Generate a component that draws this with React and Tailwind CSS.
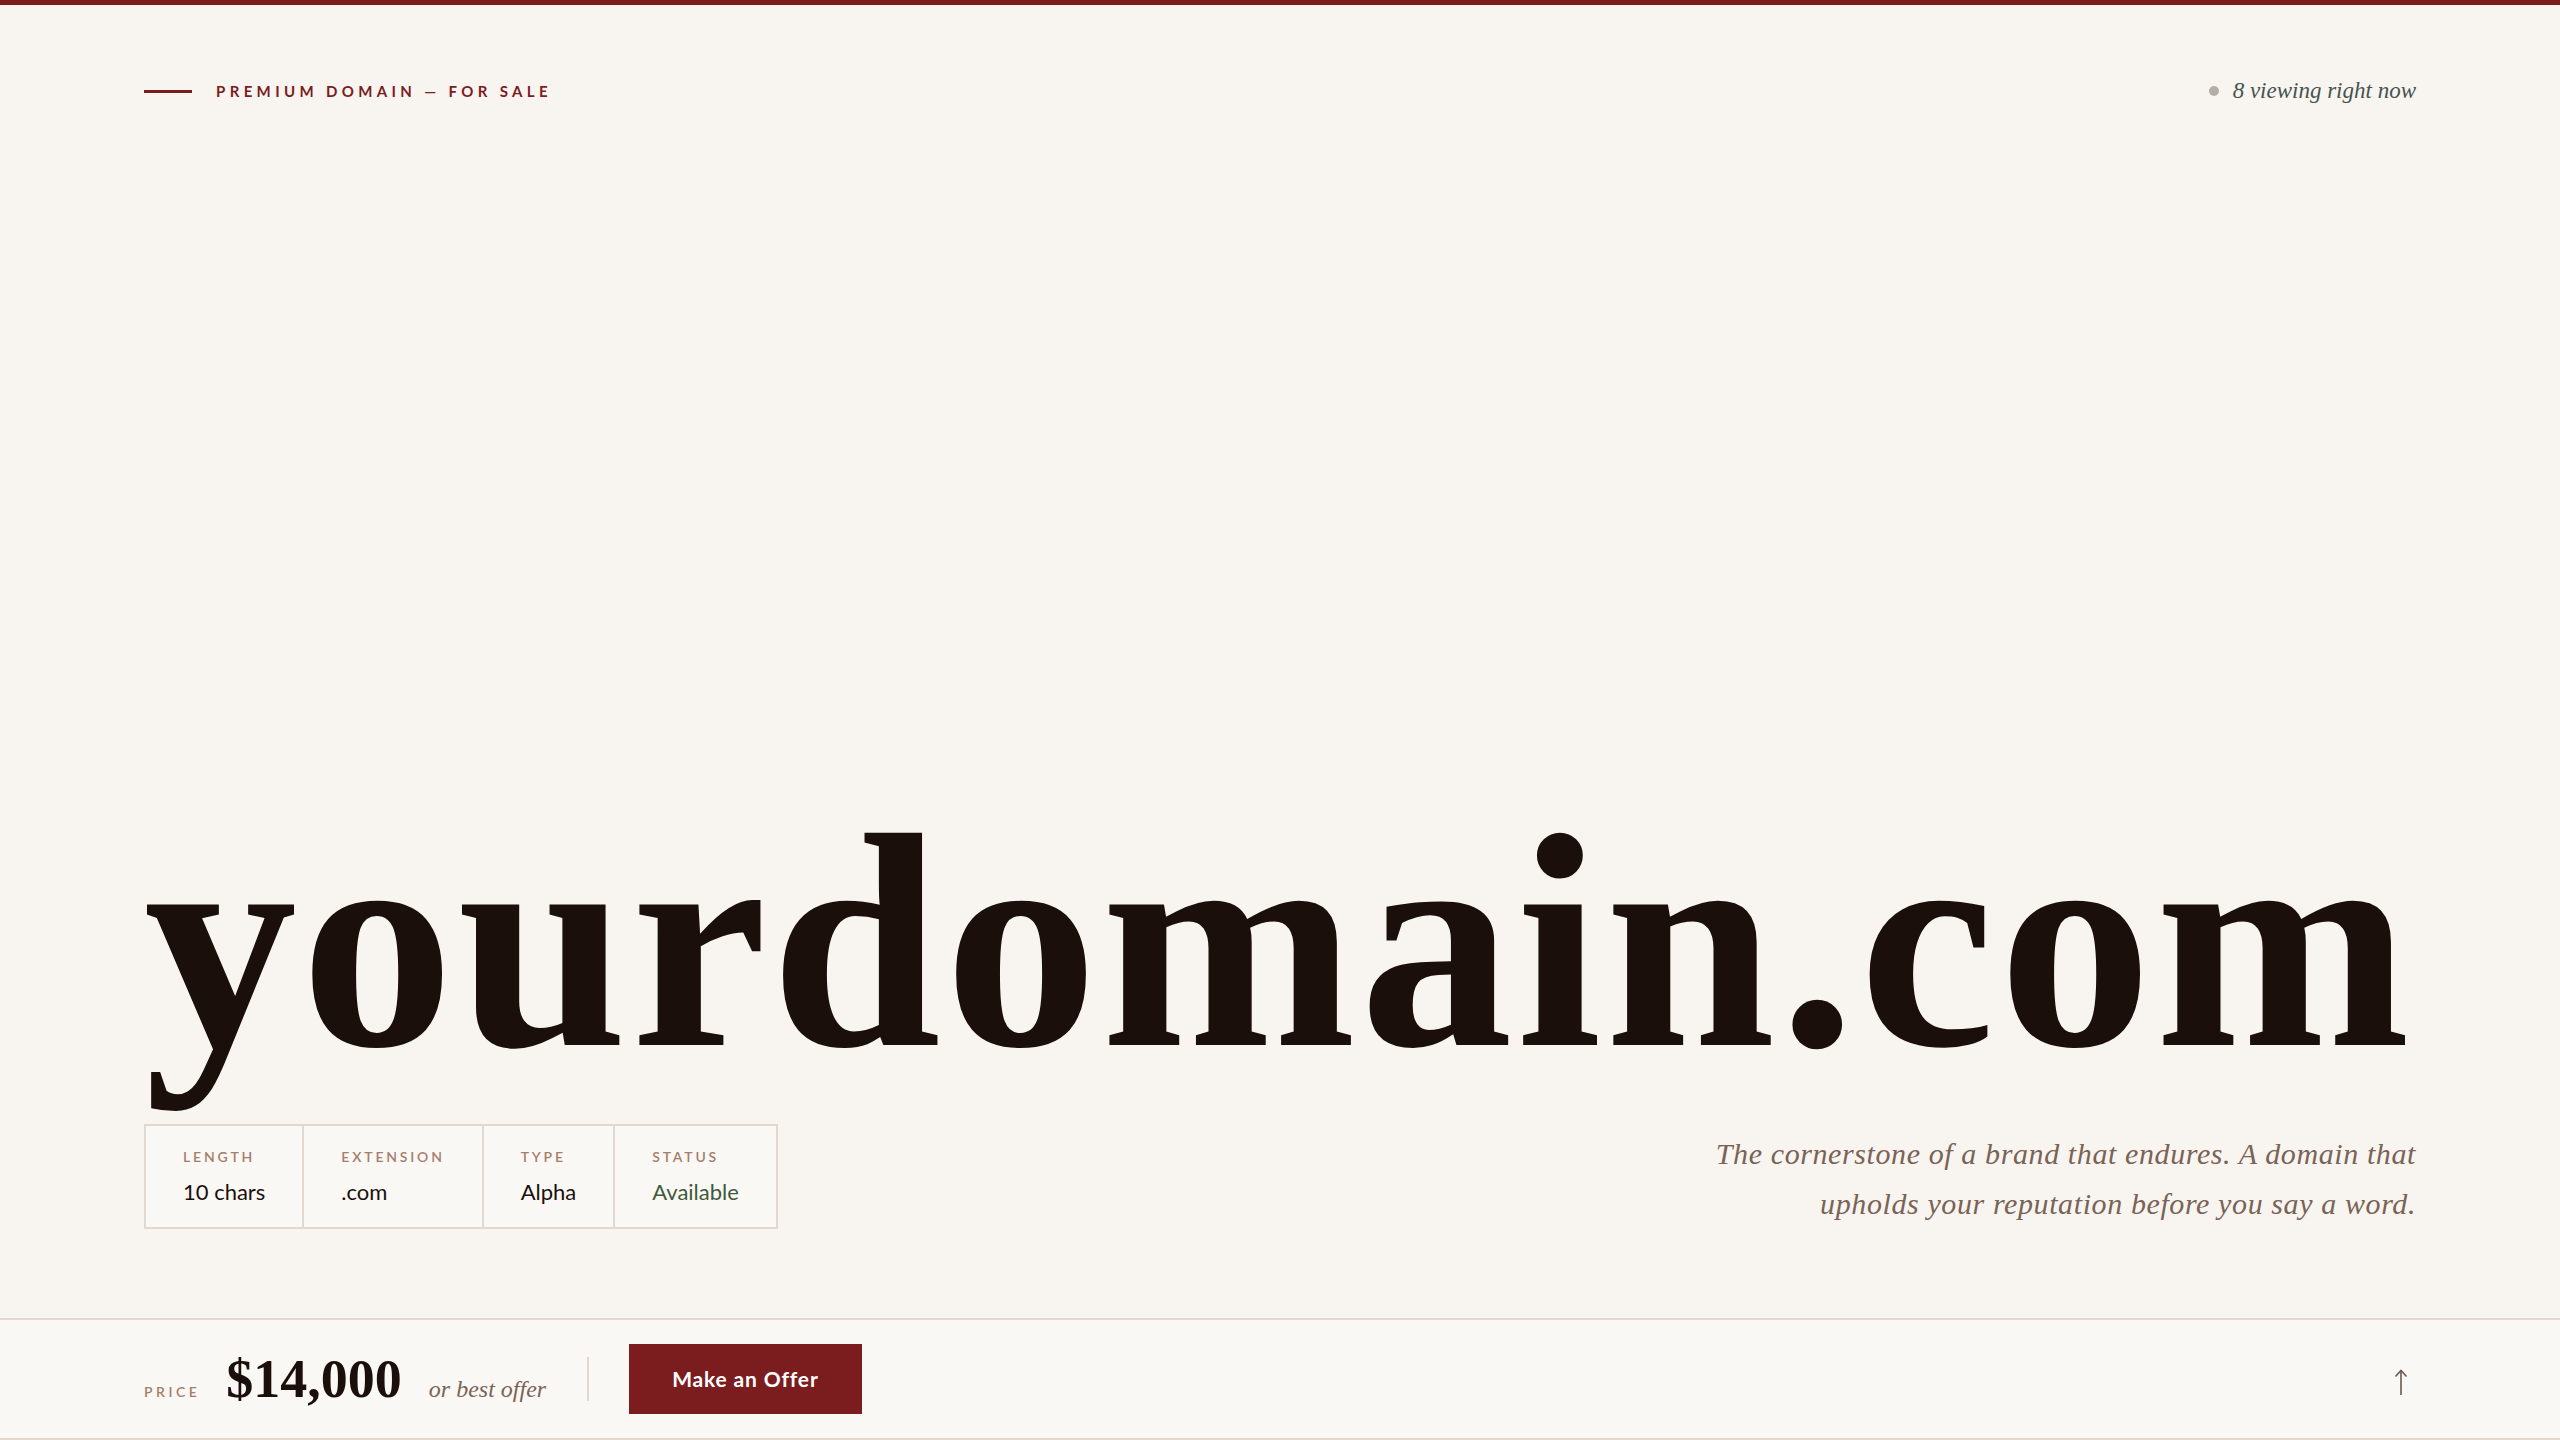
const specs = [
  { label: "Length", value: "10 chars" },
  { label: "Extension", value: ".com" },
  { label: "Type", value: "Alpha" },
  { label: "Status", value: "Available", accent: true },
]

export default function App() {
  return (
    <div className="h-screen flex flex-col bg-[#f8f5f0] font-['Lato',sans-serif] text-[#1a100c]">
      <div className="h-[5px] shrink-0 bg-[#7b1c1e]" />

      {/* top line */}
      <header className="flex items-center justify-between px-[144px] pt-[69px]">
        <div className="flex items-center gap-6">
          <span className="w-12 h-[3px] bg-[#7b1c1e]" />
          <span className="text-[15px] font-bold tracking-[0.29em] text-[#7b1c1e]">PREMIUM DOMAIN — FOR SALE</span>
        </div>
        <div className="flex items-center gap-[14px]">
          <span className="w-[10px] h-[10px] rounded-full bg-[#b5aea8]" />
          <span className="font-['Liberation_Serif',serif] italic text-[23px] text-[#46524f]">8 viewing right now</span>
        </div>
      </header>

      <main className="flex-1 flex flex-col justify-end px-[144px] pb-[89px]">
        <h1 className="font-['Liberation_Serif',serif] font-bold text-[306px] leading-none tracking-[0.012em] text-[#1a0f0b] whitespace-nowrap">
          yourdomain.com
        </h1>

        <div className="mt-[29px] flex items-end justify-between">
          <div className="flex border-2 border-[#e2d8cf] bg-[#faf8f4]">
            {specs.map((s, i) => (
              <div key={s.label} className={`px-[37px] pt-[20px] pb-[20px] ${i > 0 ? "border-l-2 border-[#e2d8cf]" : ""}`}>
                <div className="text-[14px] leading-[21px] font-semibold uppercase tracking-[0.2em] text-[#a67d6b]">{s.label}</div>
                <div className={`mt-[9px] text-[22px] leading-[31px] ${s.accent ? "text-[#3f5a3c]" : "text-[#1a100c]"}`}>{s.value}</div>
              </div>
            ))}
          </div>
          <p className="text-right font-['Liberation_Serif',serif] italic text-[30px] leading-[50px] tracking-[0.02em] text-[#7a6356]">
            The cornerstone of a brand that endures. A domain that<br />
            upholds your reputation before you say a word.
          </p>
        </div>
      </main>

      {/* price bar */}
      <footer className="h-[122px] shrink-0 flex items-center px-[144px] border-y-2 border-[#e2d8cf] bg-[#faf8f4]">
        <div className="flex items-baseline">
          <span className="text-[14px] font-semibold tracking-[0.25em] text-[#a67d6b]">PRICE</span>
          <span className="ml-[26px] font-['Liberation_Serif',serif] font-bold text-[54px] leading-none text-[#1a0f0b]">$14,000</span>
          <span className="ml-[27px] font-['Liberation_Serif',serif] italic text-[24px] text-[#7a6356]">or best offer</span>
        </div>
        <span className="ml-[41px] mr-[40px] w-[2px] h-[44px] bg-[#e2d8cf]" />
        <button className="h-[70px] px-[43px] bg-[#7b1c1e] text-white text-[21px] font-bold tracking-[0.04em] border-0 cursor-pointer">
          Make an Offer
        </button>
        <button className="ml-auto mt-[6px] w-[30px] flex justify-center bg-transparent border-0 cursor-pointer text-[#6b5a52]" aria-label="Back to top">
          <svg width="14" height="27" viewBox="0 0 14 27" fill="none" stroke="currentColor" strokeWidth="1.6">
            <path d="M7 1.5V26" />
            <path d="M1.5 7.5L7 1.5L12.5 7.5" />
          </svg>
        </button>
      </footer>
    </div>
  )
}
